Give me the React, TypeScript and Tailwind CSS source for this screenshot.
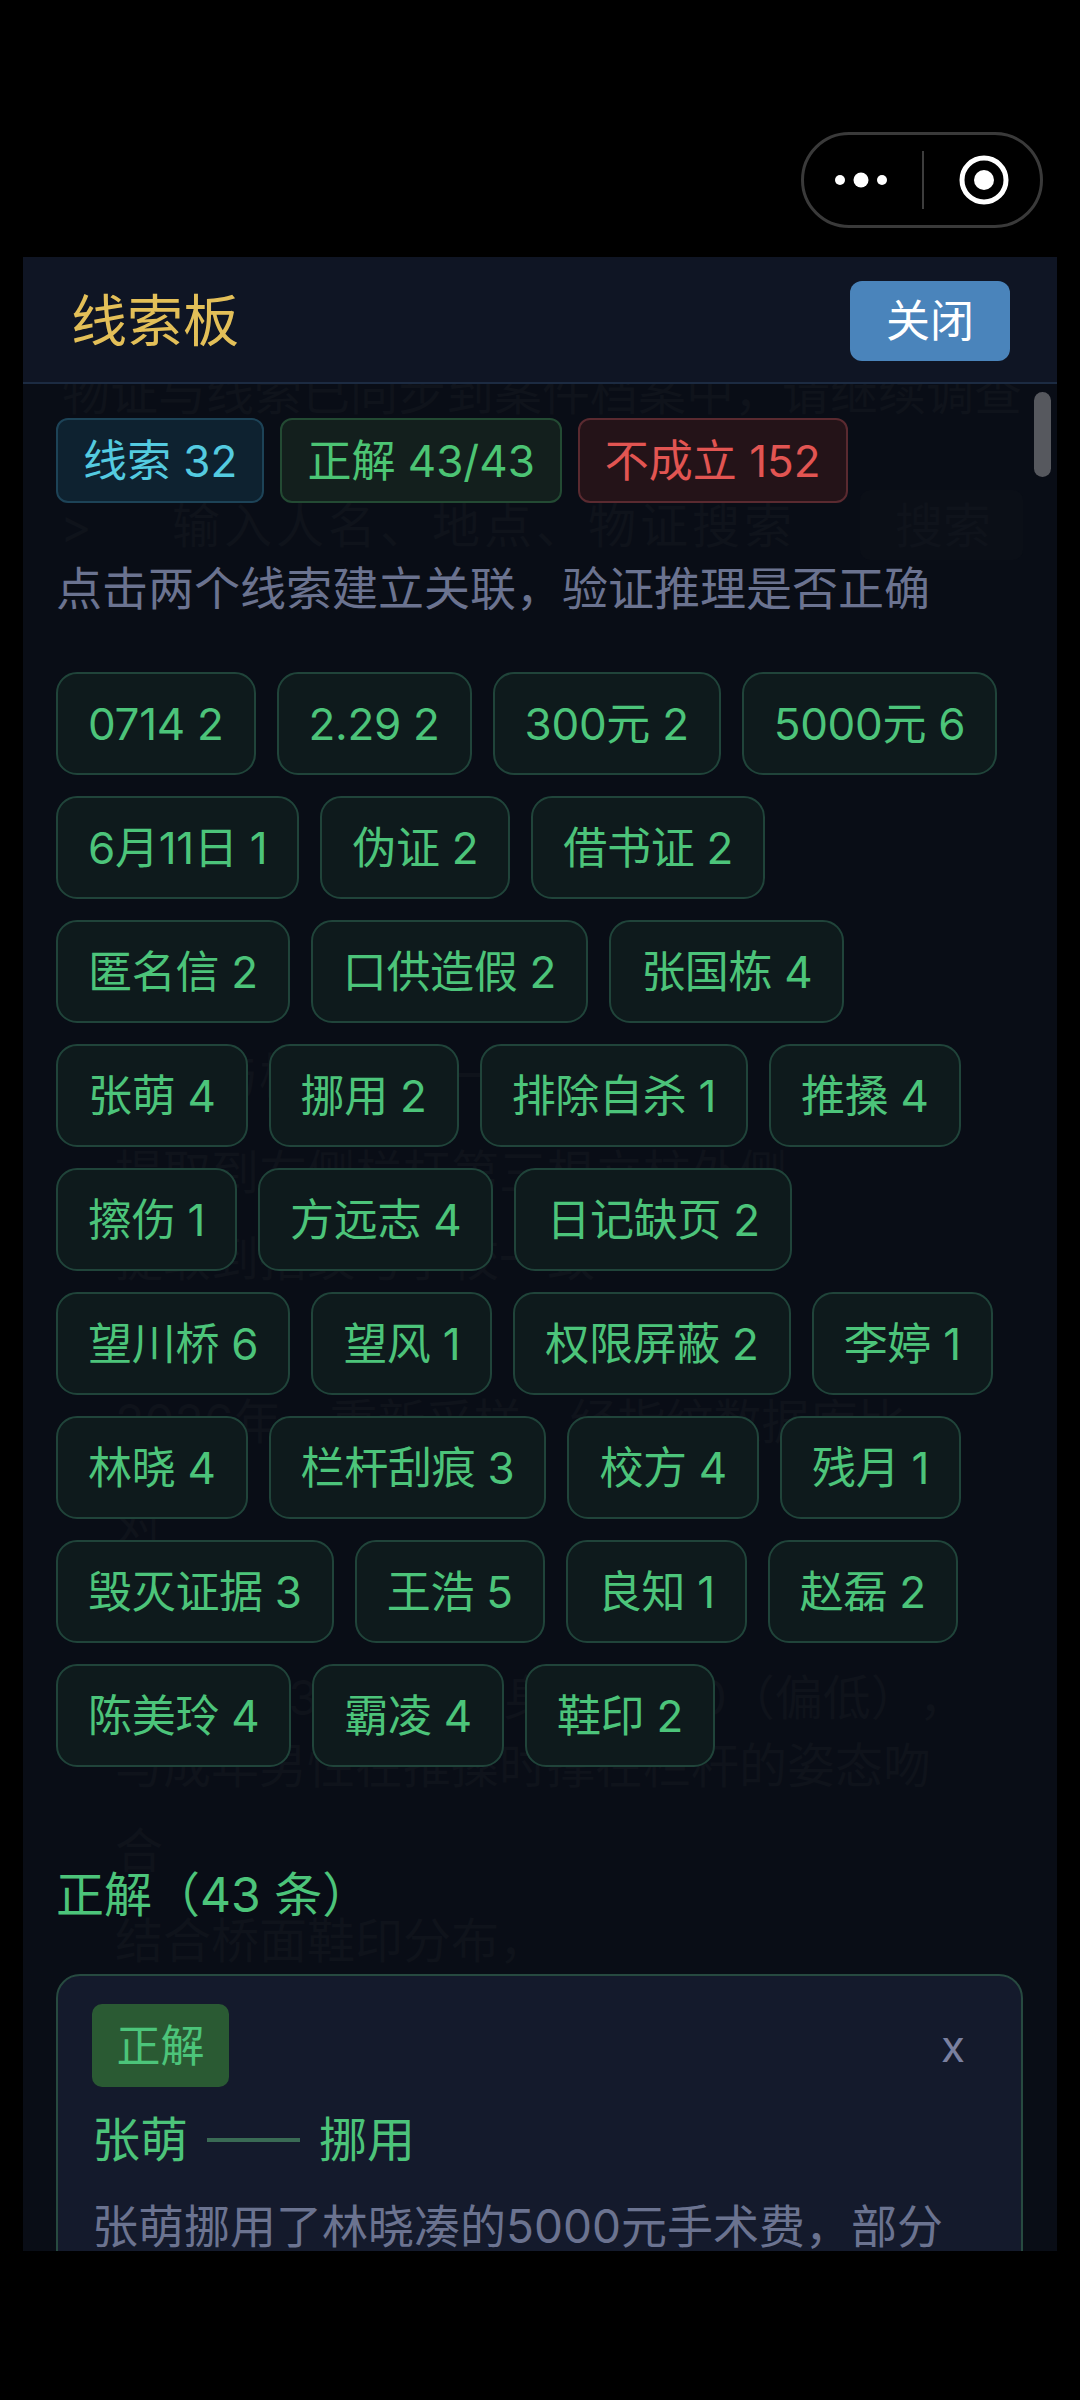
const tags = [
  '0714 2', '2.29 2', '300元 2', '5000元 6',
  '6月11日 1', '伪证 2', '借书证 2',
  '匿名信 2', '口供造假 2', '张国栋 4',
  '张萌 4', '挪用 2', '排除自杀 1', '推搡 4',
  '擦伤 1', '方远志 4', '日记缺页 2',
  '望川桥 6', '望风 1', '权限屏蔽 2', '李婷 1',
  '林晓 4', '栏杆刮痕 3', '校方 4', '残月 1',
  '毁灭证据 3', '王浩 5', '良知 1', '赵磊 2',
  '陈美玲 4', '霸凌 4', '鞋印 2',
];

// faint text of the page underneath the panel
const ghostLines = [
  { pos: 'top-[-15px] left-[39px]', text: '物证与线索已同步到案件档案中，请继续调查' },
  { pos: 'top-[118px] left-[37px]', text: '>' },
  { pos: 'top-[118px] left-[149px] tracking-[4px]', text: '输入人名、地点、物证搜索' },
  { pos: 'top-[118px] left-[872px]', text: '搜索' },
  { pos: 'top-[668px] left-[92px]', text: '信息与校方档案一致' },
  { pos: 'top-[765px] left-[92px]', text: '提取到右侧栏杆第三根立柱外侧' },
  { pos: 'top-[851px] left-[92px]', text: '提取到指纹与学校一致' },
  { pos: 'top-[1014px] left-[92px]', text: '2026年，重新采样，经指纹数据库比' },
  { pos: 'top-[1115px] left-[92px]', text: '对' },
  { pos: 'top-[1290px] left-[92px]', text: '脚长约23.5厘米，身高约160（偏低），' },
  { pos: 'top-[1358px] left-[92px]', text: '与成年男性在推搡时撑在栏杆的姿态吻' },
  { pos: 'top-[1443px] left-[92px]', text: '合' },
  { pos: 'top-[1533px] left-[92px]', text: '结合桥面鞋印分布，' },
];

function Capsule() {
  return (
    <div className="flex items-center w-[242px] h-[96px] rounded-[48px] border-[3px] border-[#3a3a3a] bg-black">
      <svg width="118" height="60" viewBox="0 0 118 60" className="shrink-0">
        <circle cx="36" cy="30" r="5" fill="#fff" />
        <circle cx="57" cy="30" r="7.5" fill="#fff" />
        <circle cx="78" cy="30" r="5" fill="#fff" />
      </svg>
      <div className="w-[2px] h-[58px] bg-[#3d3d3d] shrink-0" />
      <svg width="118" height="60" viewBox="0 0 118 60" className="shrink-0">
        <circle cx="60" cy="30" r="22" fill="none" stroke="#fff" strokeWidth="5" />
        <circle cx="60" cy="30" r="10" fill="#fff" />
      </svg>
    </div>
  );
}

export default function App() {
  return (
    <div className="w-[1080px] h-[2400px] bg-black overflow-hidden font-['Inter','Noto_Sans_CJK_SC',sans-serif] [text-spacing-trim:space-all]">
      <div className="h-[257px] pt-[132px] pr-[37px] flex justify-end items-start">
        <Capsule />
      </div>

      <div className="mx-[23px] h-[1994px] flex flex-col overflow-hidden bg-[#090d16]">
        {/* Header */}
        <div className="h-[127px] shrink-0 flex items-center justify-between pt-[3px] pl-[48px] pr-[47px] bg-[#0f1524] border-b-2 border-[#1c2b42]">
          <h1 className="text-[56px] leading-none text-[#e3bf58]">线索板</h1>
          <button className="w-[160px] h-[80px] rounded-[12px] bg-[#4a84bb] text-white text-[44px] leading-none">关闭</button>
        </div>

        {/* Body */}
        <div className="relative flex-1 overflow-hidden pl-[33px] pr-[34px] pt-[34px]">
          <div className="absolute top-[106px] left-[837px] w-[163px] h-[70px] rounded-[10px] bg-[#0b0f17]" />
          {ghostLines.map((line) => (
            <div key={line.text} className={`absolute ${line.pos} text-[48px] leading-none whitespace-nowrap text-[#0f131b]`}>
              {line.text}
            </div>
          ))}
          <div className="absolute top-[8px] right-[6px] w-[17px] h-[85px] rounded-full bg-[#56585e]" />

          <div className="relative">
            <div className="flex gap-[16px]">
              <span className="h-[85px] px-[25px] flex items-center rounded-[12px] border-2 border-[#1d4357] bg-[#0e2230] text-[44px] text-[#54cbe0]">线索 32</span>
              <span className="h-[85px] px-[25px] flex items-center rounded-[12px] border-2 border-[#234a33] bg-[#131f1d] text-[44px] text-[#4cc474]">正解 43/43</span>
              <span className="h-[85px] px-[25px] flex items-center rounded-[12px] border-2 border-[#5a2a30] bg-[#241318] text-[44px] text-[#e25552]">不成立 152</span>
            </div>

            <p className="mt-[62px] text-[46px] leading-[46px] text-[#6b7390]">点击两个线索建立关联，验证推理是否正确</p>

            <div className="mt-[61px] pr-[11px] flex flex-wrap gap-x-[21px] gap-y-[21px]">
              {tags.map((tag) => (
                <span key={tag} className="h-[103px] px-[30px] flex items-center rounded-[21px] border-2 border-[#20443a] bg-[#0e1a1c] text-[44px] tracking-[-0.3px] text-[#4cc47a]">
                  {tag}
                </span>
              ))}
            </div>

            <h2 className="mt-[105px] text-[48px] leading-[46px] text-[#4cc47a]">正解（43 条）</h2>

            {/* Result card */}
            <div className="mt-[56px] rounded-[24px] border-2 border-[#274a40] bg-[#141a2c] pl-[34px] pr-[56px] pt-[28px] pb-[60px]">
              <div className="flex items-center justify-between">
                <span className="w-[137px] h-[83px] flex items-center justify-center rounded-[10px] bg-[#2a5a33] text-[44px] text-[#4cc47a]">正解</span>
                <span className="text-[44px] leading-none text-[#7a80a0]">x</span>
              </div>
              <div className="mt-[29px] flex items-center text-[48px] leading-[48px] text-[#4cc47a]">
                <span>张萌</span>
                <span className="mx-[19px] w-[93px] h-[4px] bg-[#3a6b55]" />
                <span>挪用</span>
              </div>
              <p className="mt-[39px] text-[46px] leading-[46px] text-[#6b7390] whitespace-nowrap">张萌挪用了林晓凑的5000元手术费，部分</p>
            </div>
          </div>
        </div>
      </div>
    </div>
  );
}
